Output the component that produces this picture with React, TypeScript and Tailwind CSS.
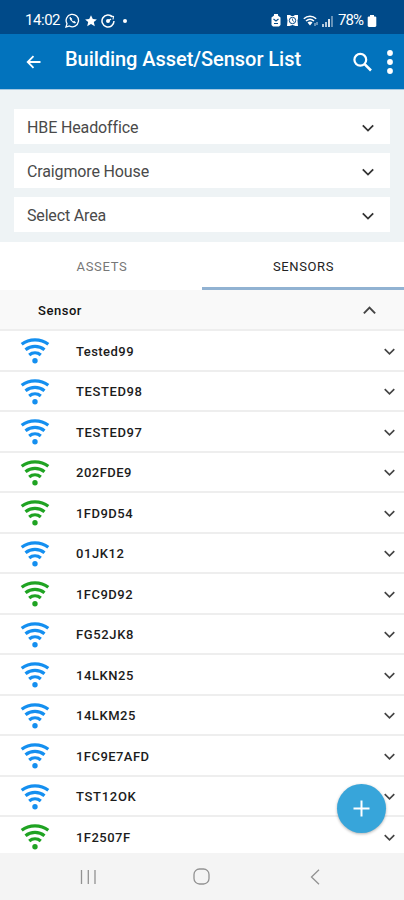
import React from "react";

const BLUE = "text-[#148ff0]";
const GREEN = "text-[#1fa322]";

const sensors: { name: string; color: string; width: number }[] = [
  { name: "Tested99", color: BLUE, width: 58 },
  { name: "TESTED98", color: BLUE, width: 66.5 },
  { name: "TESTED97", color: BLUE, width: 66.5 },
  { name: "202FDE9", color: GREEN, width: 56 },
  { name: "1FD9D54", color: GREEN, width: 57 },
  { name: "01JK12", color: BLUE, width: 48.5 },
  { name: "1FC9D92", color: GREEN, width: 57 },
  { name: "FG52JK8", color: BLUE, width: 58 },
  { name: "14LKN25", color: BLUE, width: 58 },
  { name: "14LKM25", color: BLUE, width: 60 },
  { name: "1FC9E7AFD", color: BLUE, width: 73.5 },
  { name: "TST12OK", color: BLUE, width: 60.5 },
  { name: "1F2507F", color: GREEN, width: 54.5 },
];

function Chevron({ up = false, size = 12 }: { up?: boolean; size?: number }) {
  return (
    <svg width={size} height={size} viewBox="0 0 12 12" fill="none" stroke="currentColor" strokeWidth="1.8" className="shrink-0">
      <path d={up ? "M.8 8.6 6 3.4l5.2 5.2" : "M.8 3.4 6 8.6l5.2-5.2"} />
    </svg>
  );
}

function Wifi({ color }: { color: string }) {
  return (
    <svg width="30" height="28" viewBox="0 0 30 28" fill="none" stroke="currentColor" strokeWidth="3.2" className={"shrink-0 " + color}>
      <path d="M1.700 7.300C9.200 1.400 20.800 1.400 28.300 7.300" />
      <path d="M5.500 12.800c5.500-4.500 13.500-4.500 19 0" />
      <path d="M9.200 18c3.400-2.800 8.200-2.800 11.600 0" />
      <circle cx="15" cy="23.800" r="2.700" fill="currentColor" stroke="none" />
    </svg>
  );
}

function StatusBar() {
  return (
    <div className="flex h-[34px] shrink-0 items-center bg-[#004a89] pt-[7px] pl-[25px] pr-[27px] text-white">
      <span className="w-[40px] text-[15px] leading-none tracking-[-0.45px]">14:02</span>
      <svg width="15" height="15" viewBox="0 0 15 15" fill="none" stroke="currentColor" strokeWidth="1.3">
        <path d="M1 14l1-3.300A6.200 6.200 0 1 1 4.400 13z" />
        <path d="M5.200 4.200c-1.500 1.500 3.800 7.300 5.500 5.300l-1.600-1.300-1 .6c-.8-.4-1.500-1-1.800-1.900l.6-.8z" fill="currentColor" strokeWidth=".8" />
      </svg>
      <svg width="12" height="12" viewBox="0 0 12 12" fill="currentColor" className="ml-[5px]">
        <path d="M6 .3l1.800 3.700 4.100.4-3.100 2.700 1 4.200L6 9.100l-3.800 2.200 1-4.200L.1 4.400 4.200 4z" />
      </svg>
      <svg width="14" height="14" viewBox="0 0 14 14" fill="none" stroke="currentColor" strokeWidth="1.500" className="ml-[4px]">
        <path d="M11.500 3A6 6 0 1 0 13 7" />
        <path d="M9.500 2l3 .5-.5 3" strokeWidth="1.100" />
        <circle cx="7" cy="7" r="2" fill="currentColor" stroke="none" />
        <path d="M7 7l3-2" />
      </svg>
      <span className="ml-[8px] size-[4px] rounded-full bg-white" />
      <div className="ml-auto flex items-center">
        <svg width="10" height="13" viewBox="0 0 10 13">
          <path d="M3 0h4v1.500l2.500 2V11L8 12.500H2L.5 11V3.500L3 1.500z" fill="white" />
          <path d="M2.500 5l2.500 2 2.500-2M3 9.500h4" fill="none" stroke="#004a89" strokeWidth="1.100" />
        </svg>
        <svg width="13" height="13" viewBox="0 0 13 13" className="ml-[5px]">
          <path d="M1 1h3l1.500 1h2L9 1h3v3.500L11.500 6.500l.5 5.500H9.500l-3-1-3 1H1l.5-5.500L1 4z" fill="white" />
          <circle cx="6.500" cy="6.500" r="3.200" fill="none" stroke="#004a89" />
          <path d="M6.500 4.500v2l1.500 1" fill="none" stroke="#004a89" strokeWidth=".8" />
        </svg>
        <svg width="15" height="12" viewBox="0 0 15 12" fill="none" stroke="white" strokeWidth="1.500" className="ml-[4px]">
          <path d="M.8 3.800C4.500.3 9.500.3 13.200 3.800M3 6c2.400-2.200 5.600-2.200 8 0" />
          <path d="M4.500 7.500 7 10.500l2.500-3C8 6 6 6 4.500 7.500z" fill="white" stroke="none" />
          <path d="M12 8v3M14 7v3" strokeWidth=".8" />
        </svg>
        <svg width="12" height="12" viewBox="0 0 12 12" fill="white" className="ml-[4px]">
          <path d="M0 9h2v3H0zM3 7h2v5H3z" opacity=".7" />
          <path d="M6 4h2v8H6z" opacity=".85" />
          <path d="M9 1h2v11H9z" opacity=".4" />
        </svg>
        <span className="ml-[4px] w-[29px] text-[15px] leading-none tracking-[-0.9px]">78%</span>
        <svg width="10" height="12" viewBox="0 0 10 12" fill="white">
          <path d="M3 0h4v1.500h1.500l.8.800v8.700l-1 1H1.700l-1-1V2.300l.8-.8H3z" />
        </svg>
      </div>
    </div>
  );
}

function Header() {
  return (
    <header className="flex h-[56px] shrink-0 items-center border-b border-[#a5c8e2] bg-[#0273bd] pl-[26px] pr-[11px] text-white">
      <svg width="15" height="14" viewBox="0 0 15 14" fill="none" stroke="currentColor" strokeWidth="1.800" className="mt-[1px] shrink-0">
        <path d="M14.500 7H2M7.500 1.200 1.700 7l5.800 5.800" />
      </svg>
      <h1 className="-mt-[6px] ml-[24px] grow whitespace-nowrap text-[20px] font-medium leading-6">
        <Fit width={236}>Building Asset/Sensor List</Fit>
      </h1>
      <svg width="19" height="20" viewBox="0 0 19 20" fill="none" stroke="currentColor" strokeWidth="2.200" className="mt-[1px] shrink-0">
        <circle cx="7.300" cy="7.800" r="5.900" />
        <path d="M11.600 12.100 18 18.500" strokeWidth="2.600" />
      </svg>
      <svg width="6" height="24" viewBox="0 0 6 24" fill="currentColor" className="ml-[15px] shrink-0">
        <circle cx="3" cy="3" r="2.900" />
        <circle cx="3" cy="12" r="2.900" />
        <circle cx="3" cy="21" r="2.900" />
      </svg>
    </header>
  );
}

// Spreads a label's letters evenly so that it spans the given width.
function Fit({ width, children }: { width: number; children: string }) {
  const ref = React.useRef<HTMLSpanElement>(null);
  const [spacing, setSpacing] = React.useState(0);
  React.useLayoutEffect(() => {
    const natural = ref.current!.getBoundingClientRect().width;
    setSpacing((width - natural) / children.length);
  }, []);
  return (
    <span ref={ref} className="inline-block whitespace-nowrap" style={{ letterSpacing: spacing }}>
      {children}
    </span>
  );
}

function Select({ label, width }: { label: string; width: number }) {
  return (
    <div className="flex h-[34.500px] shrink-0 items-center justify-between bg-white pl-[13px] pr-[16px] pt-[3px] text-[#333]">
      <span className="text-[16px] leading-none text-[#4a4a4a]">
        <Fit width={width}>{label}</Fit>
      </span>
      <Chevron size={12} />
    </div>
  );
}

export default function App() {
  return (
    <div className="relative flex h-[900px] w-[404px] flex-col overflow-hidden bg-white font-[Roboto,sans-serif]">
      <StatusBar />
      <Header />
      <section className="flex h-[152px] shrink-0 flex-col gap-[9.700px] bg-[#eef3f5] pl-[14px] pr-[14px] pt-[19px]">
        <Select label="HBE Headoffice" width={110} />
        <Select label="Craigmore House" width={122} />
        <Select label="Select Area" width={79} />
      </section>
      <nav className="grid h-[48px] shrink-0 grid-cols-2 text-center text-[13px]">
        <div className="pl-[2px] pt-[15px] leading-5 text-[#777]">
          <Fit width={51}>ASSETS</Fit>
        </div>
        <div className="border-b-[3px] border-[#91b2d2] pl-[1px] pt-[15px] leading-5 text-[#222]">
          <Fit width={61}>SENSORS</Fit>
        </div>
      </nav>
      <div className="flex h-[41px] shrink-0 items-center justify-between border-b-2 border-[#eee] bg-[#f9f9f9] pl-[38px] pr-[28px] pt-[1px] text-[#222]">
        <span className="text-[13px] font-medium leading-none text-[#111]">
          <Fit width={44}>Sensor</Fit>
        </span>
        <span className="text-[#444]"><Chevron up size={13} /></span>
      </div>
      <ul className="min-h-0 grow overflow-hidden">
        {sensors.map((s) => (
          <li key={s.name} className="flex h-[40.500px] items-center border-b-2 border-[#eee] pl-[20px] pr-[9px] pt-[2px]">
            <Wifi color={s.color} />
            <span className="ml-[26px] grow text-[13px] font-medium leading-none text-[#1c1c1c]">
              <Fit width={s.width}>{s.name}</Fit>
            </span>
            <span className="text-[#444]"><Chevron size={11} /></span>
          </li>
        ))}
      </ul>
      <footer className="flex h-[47px] shrink-0 items-center bg-[#f4f4f4] text-[#929292]">
        <svg width="16" height="16" viewBox="0 0 16 16" stroke="currentColor" strokeWidth="1.300" className="ml-[80px]">
          <path d="M1.500 1v14M8.300 1v14M15 1v14" />
        </svg>
        <svg width="17" height="17" viewBox="0 0 17 17" fill="none" stroke="currentColor" strokeWidth="1.300" className="ml-[97px]">
          <rect x="1" y="1" width="15" height="15" rx="5.500" />
        </svg>
        <svg width="10" height="16" viewBox="0 0 10 16" fill="none" stroke="currentColor" strokeWidth="1.300" className="ml-[100px]">
          <path d="M9 .8 1.500 8 9 15.200" />
        </svg>
      </footer>
      <button className="absolute left-[337px] top-[784px] flex size-[49px] items-center justify-center rounded-full bg-[#37a5da] text-white shadow-[0_1px_3px_rgba(0,0,0,0.3)]">
        <svg width="17" height="17" viewBox="0 0 17 17" stroke="currentColor" strokeWidth="2">
          <path d="M8.500 .5v16M.5 8.500h16" />
        </svg>
      </button>
    </div>
  );
}
